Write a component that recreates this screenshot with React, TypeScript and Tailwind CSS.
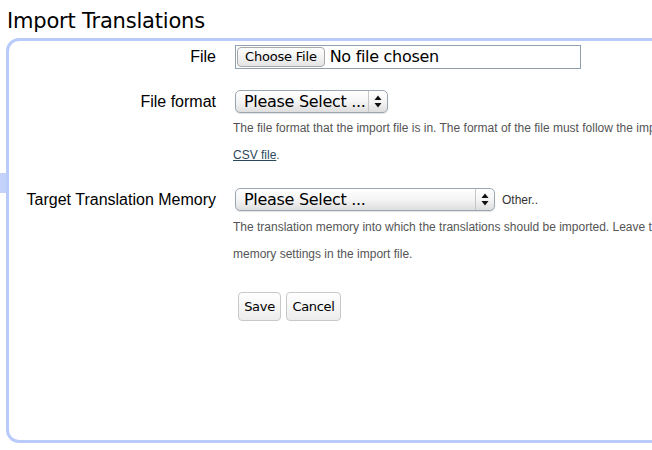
import { ReactNode } from "react";

function UpDown() {
	return (
		<svg width="8" height="13" viewBox="0 0 8 13" className="block">
			<path d="M4 0.5 L7.5 5 L0.5 5 Z" fill="#111" />
			<path d="M4 12.5 L7.5 8 L0.5 8 Z" fill="#111" />
		</svg>
	);
}

function FakeSelect({ width }: { width: string }) {
	return (
		<div
			className={`${width} h-[23px] shrink-0 flex items-stretch rounded-[5px] border border-[#9aa7b3] bg-gradient-to-b from-white via-[#f5f5f5] to-[#dedede] shadow-[0_1px_1px_rgba(0,0,0,0.12)]`}
		>
			<span className="flex-1 pl-[8px] leading-[21px] text-[16px] text-black font-['DejaVu_Sans',sans-serif] tracking-[-0.3px]">
				Please Select ...
			</span>
			<span className="w-[19px] border-l border-[#c6c6c6] flex items-center justify-center">
				<UpDown />
			</span>
		</div>
	);
}

function Row({ label, children }: { label: string; children: ReactNode }) {
	return (
		<div className="flex items-start">
			<div className="w-[207px] shrink-0 text-right text-[16px] text-black h-[23px] leading-[23px]">
				{label}
			</div>
			<div className="ml-[19px] flex flex-col">{children}</div>
		</div>
	);
}

export default function App() {
	return (
		<div className="relative w-[652px] h-[450px] overflow-hidden bg-white font-['Liberation_Sans',Arial,sans-serif]">
			<h1 className="pl-[7px] pt-[9px] h-[38px] text-[21px] leading-[24px] text-black font-['DejaVu_Sans',sans-serif] tracking-[-0.2px]">
				Import Translations
			</h1>

			<div className="ml-[6px] w-[700px] h-[405px] border-[3px] border-[#b9cbfb] rounded-[13px] pt-[4px]">
				<form className="flex flex-col">
					<div className="flex items-center">
						<div className="w-[207px] shrink-0 text-right text-[16px] text-black">File</div>
						<div className="ml-[19px] w-[346px] h-[24px] border border-[#8fa1b1] flex items-center pl-[1px]">
							<span className="h-[20px] px-[7px] rounded-[4px] border border-[#a8a8a8] bg-gradient-to-b from-white to-[#e4e4e4] text-[13px] leading-[18px] text-black font-['DejaVu_Sans',sans-serif] tracking-[-0.2px]">
								Choose File
							</span>
							<span className="ml-[5px] text-[16px] text-black font-['DejaVu_Sans',sans-serif] tracking-[-0.3px]">
								No file chosen
							</span>
						</div>
					</div>

					<div className="mt-[21px]">
						<Row label="File format">
							<FakeSelect width="w-[153px]" />
							<p className="mt-[2px] -ml-[2px] text-[12px] leading-[27px] text-[#555] whitespace-nowrap">
								The file format that the import file is in. The format of the file must follow the import file format described in the
								<br />
								<a href="#" className="underline text-[#2c4a5e]">
									CSV file
								</a>
								.
							</p>
						</Row>
					</div>

					<div className="mt-[19px]">
						<Row label="Target Translation Memory">
							<div className="flex items-center">
								<FakeSelect width="w-[260px]" />
								<span className="ml-[7px] text-[12px] text-[#333]">Other..</span>
							</div>
							<p className="mt-[3px] -ml-[2px] text-[12px] leading-[27px] text-[#555] whitespace-nowrap">
								The translation memory into which the translations should be imported. Leave this blank to use the translation
								<br />
								memory settings in the import file.
							</p>
						</Row>
					</div>

					<div className="mt-[24px] ml-[229px] flex gap-[5px] font-['DejaVu_Sans',sans-serif] text-[13px] text-black tracking-[-0.3px]">
						<button type="submit" className="h-[29px] w-[43px] rounded-[4px] border border-[#c8c8c8] bg-gradient-to-b from-white to-[#ececec]">
							Save
						</button>
						<button type="button" className="h-[29px] w-[55px] rounded-[4px] border border-[#c8c8c8] bg-gradient-to-b from-white to-[#ececec]">
							Cancel
						</button>
					</div>
				</form>
			</div>

			<div className="absolute left-0 top-[173px] w-[6px] h-[20px] bg-[#c3d2fb]" />
		</div>
	);
}
